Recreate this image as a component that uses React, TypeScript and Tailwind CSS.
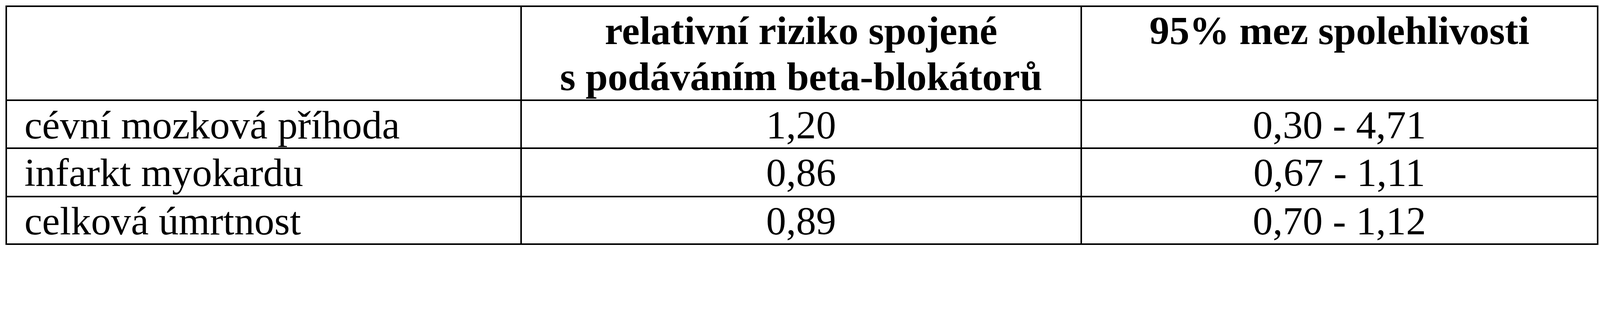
import React from 'react';

interface Row {
    label: string;
    risk: string;
    range: string;
}

const rows: Row[] = [
    { label: 'cévní mozková příhoda', risk: '1,20', range: '0,30 - 4,71' },
    { label: 'infarkt myokardu', risk: '0,86', range: '0,67 - 1,11' },
    { label: 'celková úmrtnost', risk: '0,89', range: '0,70 - 1,12' },
];

const cell = 'bg-white pt-[2.4px] leading-[117.6px] whitespace-nowrap';

const App: React.FC = () => {
    return (
        <div className="min-h-screen bg-white pt-[13.6px] pl-[13.6px] font-['Liberation_Serif','Times_New_Roman',serif] text-[102.4px] text-black">
            <div className="grid w-[4078.4px] grid-cols-[1314.4px_1429.6px_1318.4px] grid-rows-[237.6px_118.4px_120px_118.4px] gap-[4px] bg-black p-[4px]">
                <div className={cell}></div>
                <div className={`${cell} text-center font-bold`}>
                    relativní riziko spojené
                    <br />s podáváním beta-blokátorů
                </div>
                <div className={`${cell} text-center font-bold`}>95% mez spolehlivosti</div>

                {rows.map((r) => (
                    <React.Fragment key={r.label}>
                        <div className={`${cell} pl-[44.8px]`}>{r.label}</div>
                        <div className={`${cell} text-center`}>{r.risk}</div>
                        <div className={`${cell} text-center`}>{r.range}</div>
                    </React.Fragment>
                ))}
            </div>
        </div>
    );
};

export default App;
